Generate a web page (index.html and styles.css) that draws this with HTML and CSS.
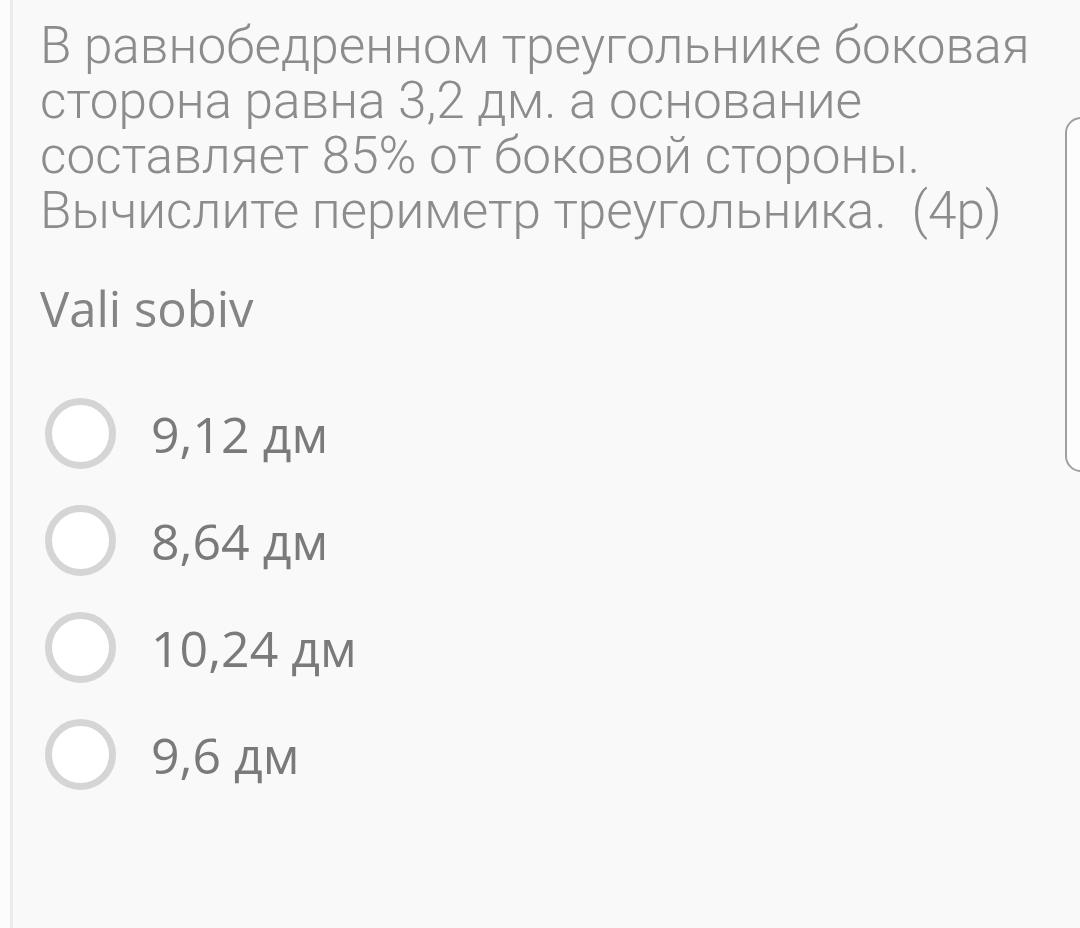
FILE: index.html
```html
<!DOCTYPE html>
<html lang="ru">
<head>
<meta charset="utf-8">
<link rel="stylesheet" href="styles.css">
</head>
<body>
<div class="page">
  <div class="card">
    <p class="question">В равнобедренном треугольнике боковая сторона равна 3,2 дм. а основание составляет 85% от боковой стороны. Вычислите периметр треугольника.&nbsp; (4р)</p>
    <p class="hint">Vali sobiv</p>
    <ul class="options">
      <li class="option"><span class="radio"></span><span class="label">9,12 дм</span></li>
      <li class="option"><span class="radio"></span><span class="label">8,64 дм</span></li>
      <li class="option"><span class="radio"></span><span class="label">10,24 дм</span></li>
      <li class="option"><span class="radio"></span><span class="label">9,6 дм</span></li>
    </ul>
  </div>
  <div class="side-panel"></div>
</div>
</body>
</html>
```
FILE: styles.css
```css
html, body {
  margin: 0;
  padding: 0;
  width: 1080px;
  height: 928px;
  overflow: hidden;
  background: #fcfcfc;
}
.page {
  position: relative;
  width: 1080px;
  height: 928px;
  padding-left: 10px;
  box-sizing: border-box;
}
.card {
  height: 100%;
  border-left: 3px solid #ebebeb;
  background: #f9f9f9;
  padding: 18px 0 0 27px;
  box-sizing: border-box;
}
.question {
  margin: 0;
  font-family: "Roboto Light", Roboto, "Liberation Sans", sans-serif;
  font-weight: 300;
  font-size: 51.3px;
  line-height: 55px;
  color: #8c8c8c;
  width: 1020px;
}
.hint {
  margin: 40px 0 0 0;
  font-family: "Open Sans", "Liberation Sans", sans-serif;
  font-size: 49px;
  line-height: 60px;
  color: #848484;
}
.options {
  list-style: none;
  margin: 42px 0 0 0;
  padding: 0;
}
.option {
  display: flex;
  align-items: center;
  height: 107px;
  gap: 35px;
}
.radio {
  width: 57px;
  height: 57px;
  border: 7px solid #d5d5d5;
  border-radius: 50%;
  background: #ffffff;
  margin-left: 5px;
  flex: none;
}
.label {
  font-family: "Open Sans", "Liberation Sans", sans-serif;
  font-size: 50px;
  line-height: 60px;
  color: #7a7a7a;
}
.side-panel {
  position: absolute;
  left: 1065px;
  top: 117px;
  width: 60px;
  height: 351px;
  border: 2px solid #a0a0a0;
  border-radius: 16px;
  background: #fdfdfd;
}
```
